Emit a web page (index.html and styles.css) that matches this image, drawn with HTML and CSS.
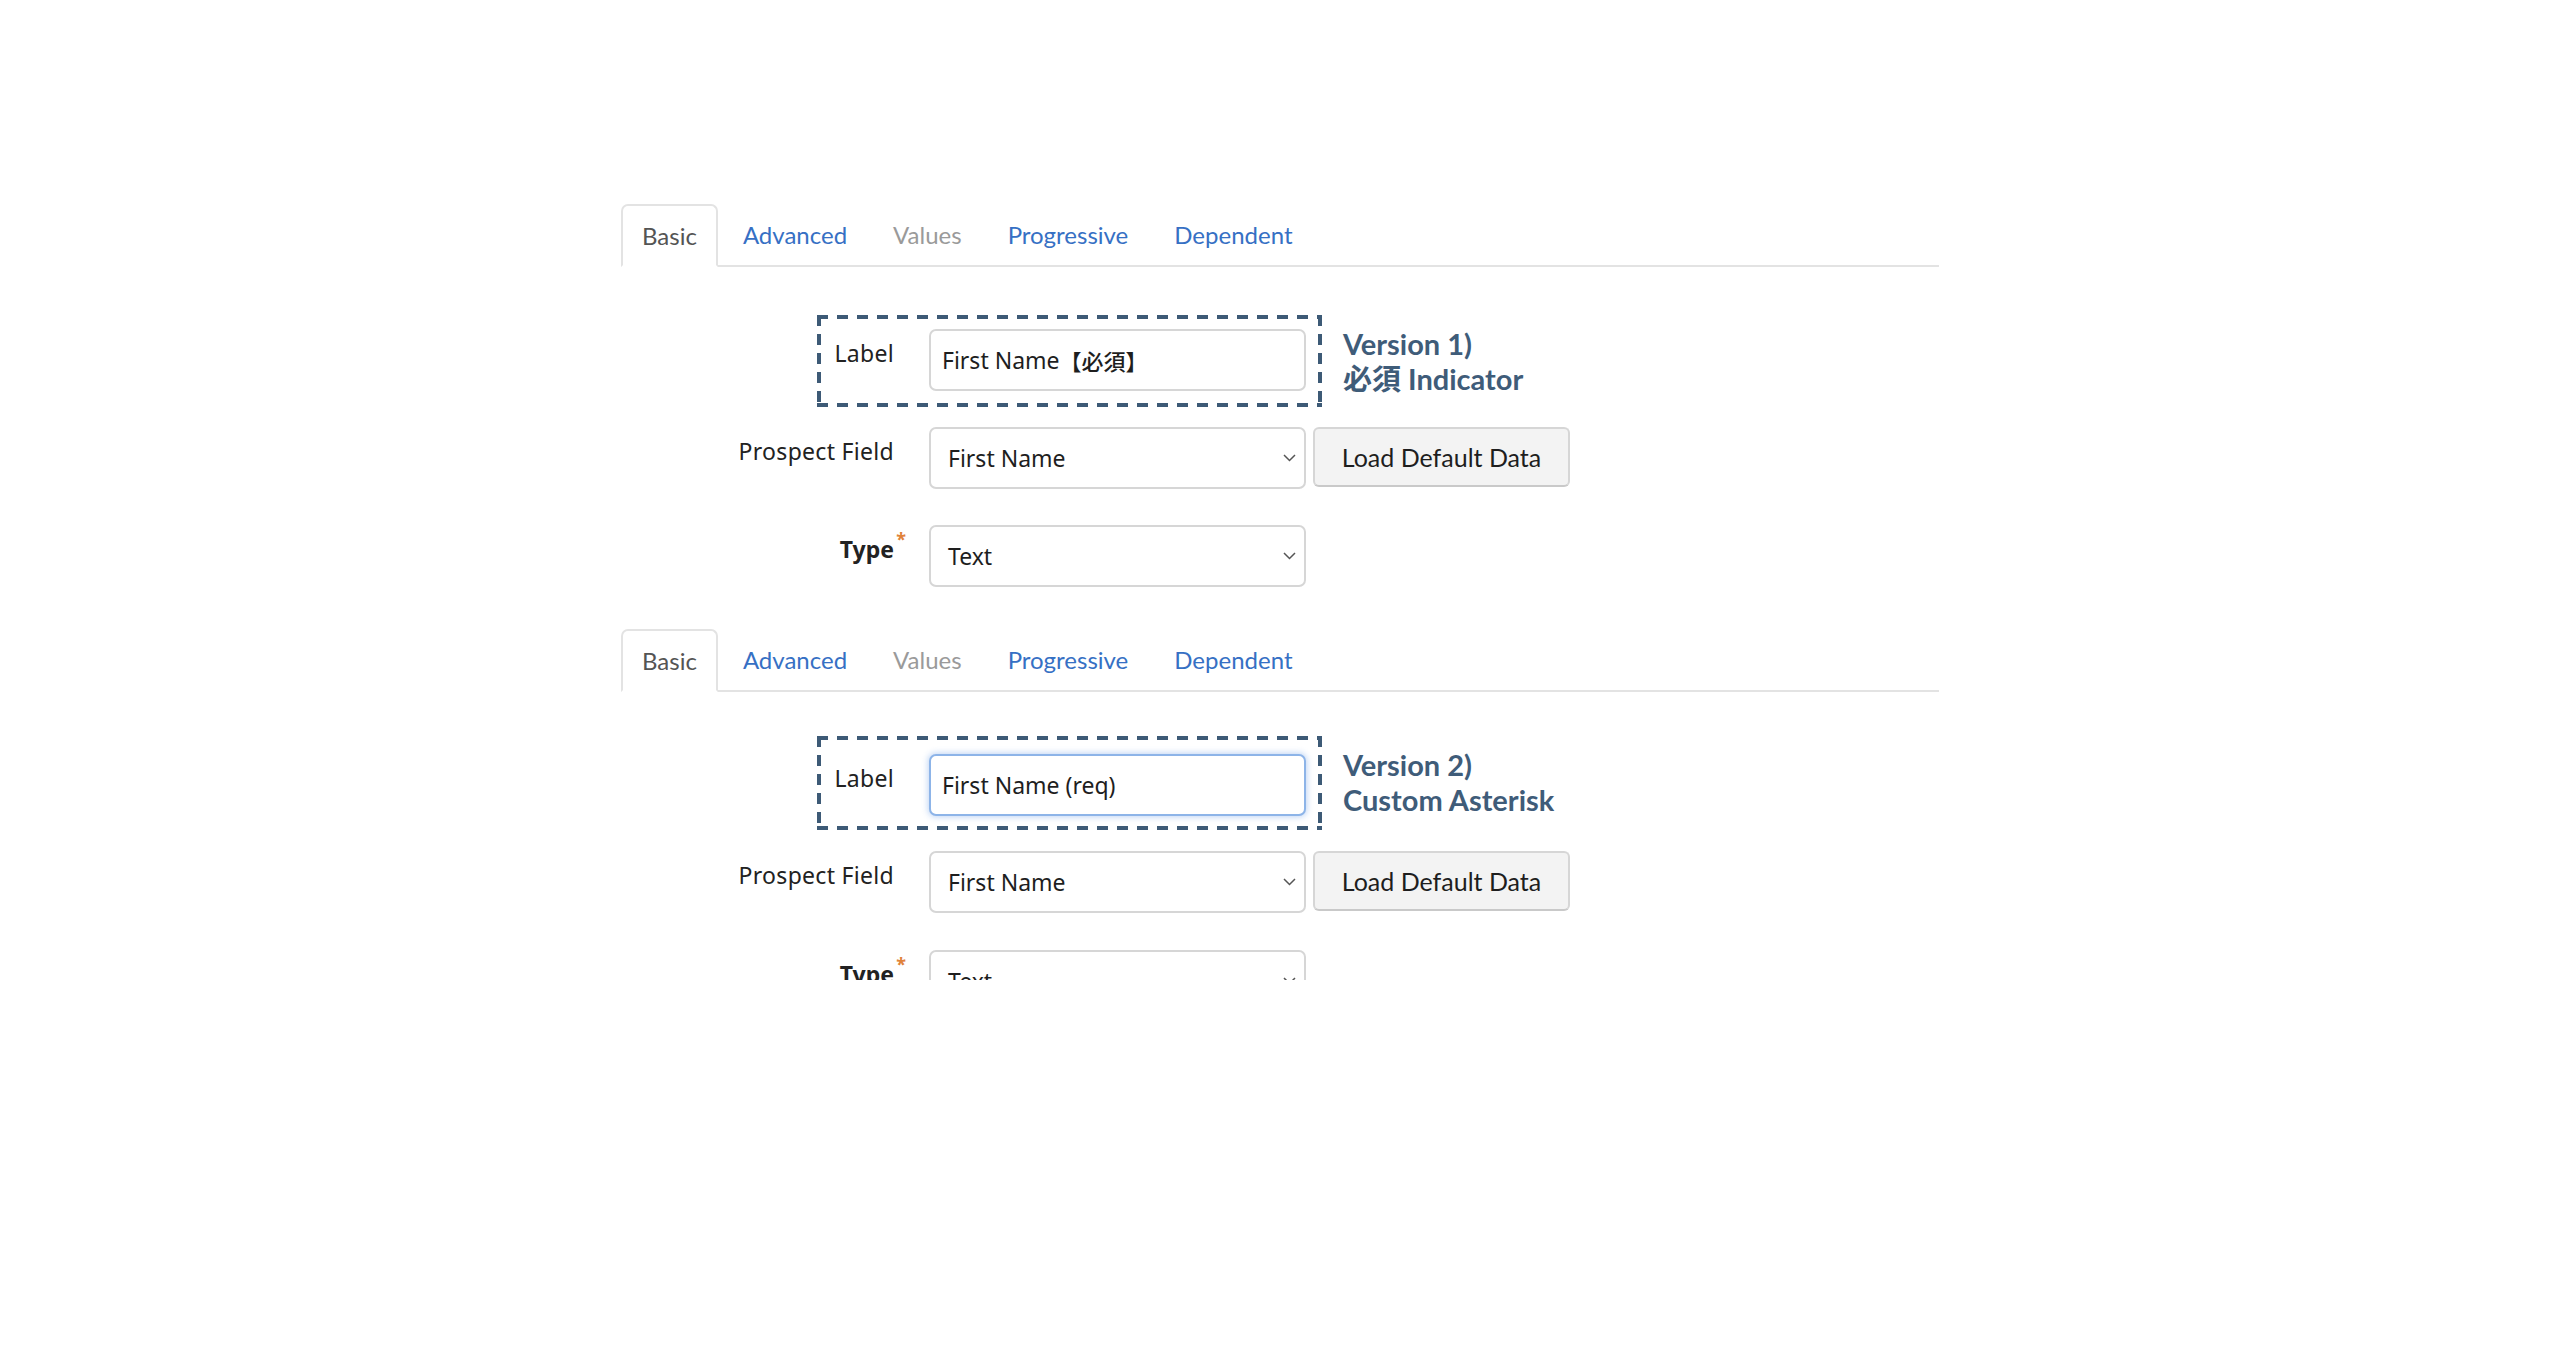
FILE: index.html
```html
<!DOCTYPE html>
<html lang="en">
<head>
<meta charset="utf-8">
<title>Form field editor – required label versions</title>
<link rel="stylesheet" href="styles.css">
</head>
<body>
<main class="page">

  <section class="editor editor--v1">
    <nav class="tabs">
      <span class="tab tab--active">Basic</span>
      <span class="tab tab--link">Advanced</span>
      <span class="tab tab--disabled">Values</span>
      <span class="tab tab--link">Progressive</span>
      <span class="tab tab--link">Dependent</span>
    </nav>

    <div class="hl-wrap">
      <div class="hl-box">
        <label class="field-label field-label--short">Label</label>
        <div class="input">First Name<span class="cjk">【必須】</span></div>
      </div>
      <p class="note">Version 1)<br>必須 Indicator</p>
    </div>

    <div class="form-row form-row--prospect">
      <label class="field-label">Prospect Field</label>
      <div class="select"><span>First Name</span><svg class="chev" width="13" height="8" viewBox="0 0 13 8"><polyline points="1,1 6.5,6.5 12,1" fill="none" stroke="#555" stroke-width="1.5"/></svg></div>
      <button class="btn">Load Default Data</button>
    </div>

    <div class="form-row form-row--type">
      <label class="field-label field-label--req"><span class="req-wrap">Type<span class="req">*</span></span></label>
      <div class="select"><span>Text</span><svg class="chev" width="13" height="8" viewBox="0 0 13 8"><polyline points="1,1 6.5,6.5 12,1" fill="none" stroke="#555" stroke-width="1.5"/></svg></div>
    </div>
  </section>

  <section class="editor editor--v2">
    <nav class="tabs">
      <span class="tab tab--active">Basic</span>
      <span class="tab tab--link">Advanced</span>
      <span class="tab tab--disabled">Values</span>
      <span class="tab tab--link">Progressive</span>
      <span class="tab tab--link">Dependent</span>
    </nav>

    <div class="hl-wrap">
      <div class="hl-box">
        <label class="field-label field-label--short">Label</label>
        <div class="input input--focus">First Name (req)</div>
      </div>
      <p class="note">Version 2)<br>Custom Asterisk</p>
    </div>

    <div class="form-row form-row--prospect">
      <label class="field-label">Prospect Field</label>
      <div class="select"><span>First Name</span><svg class="chev" width="13" height="8" viewBox="0 0 13 8"><polyline points="1,1 6.5,6.5 12,1" fill="none" stroke="#555" stroke-width="1.5"/></svg></div>
      <button class="btn">Load Default Data</button>
    </div>

    <div class="form-row form-row--type">
      <label class="field-label field-label--req"><span class="req-wrap">Type<span class="req">*</span></span></label>
      <div class="select"><span>Text</span><svg class="chev" width="13" height="8" viewBox="0 0 13 8"><polyline points="1,1 6.5,6.5 12,1" fill="none" stroke="#555" stroke-width="1.5"/></svg></div>
    </div>
  </section>

</main>
</body>
</html>
```

FILE: styles.css
```css
* { box-sizing: border-box; }

html, body {
  margin: 0;
  background: #fff;
}

body {
  font-family: "Noto Sans", "Noto Sans CJK JP", sans-serif;
  color: #222;
}

.page {
  width: 1318px;
  margin: 0 auto;
  padding-top: 204px;
}

/* ---------- tabs ---------- */
.tabs {
  display: flex;
  align-items: flex-end;
  height: 63px;
  border-bottom: 2px solid #e3e3e3;
  font-family: Lato, "Noto Sans", sans-serif;
  font-size: 24px;
}

.tab {
  height: 61px;
  line-height: 61px;
  padding: 0 21px;
  margin-right: 4px;
  white-space: nowrap;
}

.tab--active {
  height: 63px;
  line-height: 59px;
  margin-bottom: -2px;
  padding: 0 19px;
  border: 2px solid #e3e3e3;
  border-bottom-color: #fff;
  border-radius: 7px 7px 0 0;
  background: #fff;
  color: #545454;
}

.tab--link { color: #3670c4; }
.tab--disabled { color: #9a9a9a; }

/* ---------- highlighted (dashed) row ---------- */
.hl-wrap {
  display: flex;
  align-items: flex-start;
  margin-left: 196px;
  margin-top: 48px;
}

.hl-box {
  display: flex;
  align-items: flex-start;
  width: 505px;
  padding: 14px 16px 16px 0;
  --dash: #3d5a76;
  background:
    repeating-linear-gradient(90deg, var(--dash) 0 11px, transparent 11px 20px) left top / 100% 4px no-repeat,
    repeating-linear-gradient(90deg, var(--dash) 0 11px, transparent 11px 20px) left bottom / 100% 4px no-repeat,
    repeating-linear-gradient(180deg, var(--dash) 0 11px, transparent 11px 19px) left top / 4px 100% no-repeat,
    repeating-linear-gradient(180deg, var(--dash) 0 11px, transparent 11px 19px) right top / 4px 100% no-repeat;
}

.note {
  margin: 0 0 0 21px;
  padding-top: 11px;
  font-family: Lato, "Noto Sans CJK JP", sans-serif;
  font-weight: 700;
  font-size: 29px;
  line-height: 35px;
  color: #3f5c79;
}

/* ---------- generic rows ---------- */
.form-row {
  display: flex;
  align-items: flex-start;
}

.form-row--prospect { margin-top: 20px; }
.form-row--type { margin-top: 36px; }

.field-label {
  flex: none;
  width: 273px;
  margin-right: 35px;
  padding-top: 9px;
  text-align: right;
  font-size: 23px;
  letter-spacing: 0.3px;
  line-height: 30px;
  color: #222;
}

.field-label--short { width: 77px; }

.field-label--req { font-weight: 700; letter-spacing: 0; }

.req-wrap { position: relative; }

.req {
  position: absolute;
  right: -12px;
  top: -9px;
  font-size: 18px;
  font-weight: 700;
  color: #e0823a;
}

.input,
.select {
  flex: none;
  display: flex;
  align-items: center;
  width: 377px;
  height: 62px;
  border: 2px solid #d6d6d6;
  border-radius: 7px;
  background: #fff;
  font-size: 23px;
  color: #1e1e1e;
  white-space: nowrap;
}

.input { padding: 0 11px; }

.input .cjk {
  font-family: "Noto Sans CJK JP", sans-serif;
  font-weight: 500;
  font-size: 22px;
}

.input--focus {
  border-color: #8db4e8;
  box-shadow: 0 0 6px 1px rgba(110, 160, 230, 0.45);
}

.select { padding: 0 8px 0 17px; }

.select .chev {
  margin-left: auto;
  flex: none;
}

.btn {
  flex: none;
  width: 257px;
  height: 60px;
  margin-left: 7px;
  border: 2px solid #d6d6d6;
  border-bottom-color: #c9c9c9;
  border-radius: 6px;
  background: #f3f3f3;
  font-family: Lato, "Noto Sans", sans-serif;
  font-size: 25px;
  color: #1e1e1e;
  padding: 0;
}

/* ---------- second screenshot (cropped at the bottom) ---------- */
.editor--v2 {
  position: relative;
  margin-top: 42px;
  height: 351px;
  overflow: hidden;
}

.editor--v2::before {
  content: "";
  position: absolute;
  left: -20px;
  top: 176px;
  width: 2px;
  height: 107px;
  background: #f0f0f0;
}

.editor--v2 .hl-wrap { margin-top: 44px; }
.editor--v2 .hl-box { padding: 18px 16px 14px 0; }
.editor--v2 .form-row--prospect { margin-top: 21px; }
.editor--v2 .form-row--type { margin-top: 37px; }
```
